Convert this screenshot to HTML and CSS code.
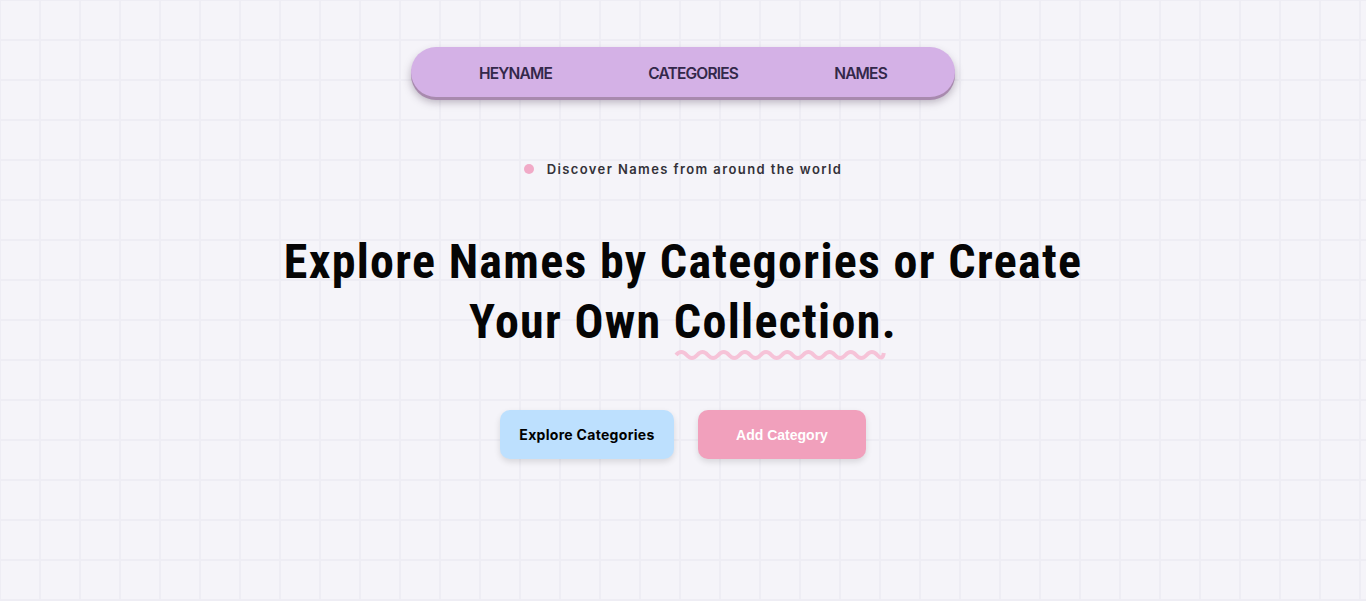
FILE: index.html
```html
<!DOCTYPE html>
<html lang="en">
<head>
<meta charset="utf-8">
<title>HeyName</title>
<link rel="stylesheet" href="styles.css">
</head>
<body>
<div class="page">
  <nav class="nav">
    <a class="nav-link" href="#">HEYNAME</a>
    <a class="nav-link" href="#">CATEGORIES</a>
    <a class="nav-link" href="#">NAMES</a>
  </nav>
  <main class="hero">
    <p class="eyebrow"><span class="dot"></span>Discover Names from around the world</p>
    <h1 class="title">Explore Names by Categories or Create<br>Your Own <span class="wavy">Collection<svg class="wave" viewBox="0 0 210 12" preserveAspectRatio="none"><path d="M2 6 Q7.25 0 12.5 6 T23 6 T33.5 6 T44 6 T54.5 6 T65 6 T75.5 6 T86 6 T96.5 6 T107 6 T117.5 6 T128 6 T138.5 6 T149 6 T159.5 6 T170 6 T180.5 6 T191 6 T201.5 6 T208 4" fill="none" stroke="#f6c3d8" stroke-width="4"/></svg></span>.</h1>
    <div class="actions">
      <a class="btn btn-blue" href="#">Explore Categories</a>
      <a class="btn btn-pink" href="#">Add Category</a>
    </div>
  </main>
</div>
</body>
</html>
```
FILE: styles.css
```css
html, body {
  margin: 0;
  padding: 0;
}
body {
  background-color: #f5f4f9;
  background-image:
    linear-gradient(to right, #eeedf4 2px, transparent 2px),
    linear-gradient(to bottom, #eeedf4 2px, transparent 2px);
  background-size: 40px 40px;
  background-position: -1px -1px;
  min-height: 601px;
}
.page {
  display: flex;
  flex-direction: column;
  align-items: center;
  padding-top: 47px;
}
.nav {
  width: 544px;
  height: 50px;
  box-sizing: border-box;
  padding: 2px 68px 0;
  display: flex;
  justify-content: space-between;
  align-items: center;
  background: #d4b1e6;
  border-radius: 25px;
  box-shadow: 0 3px 0 #a88aae, 0 5px 8px rgba(60, 40, 70, 0.35);
}
.nav-link {
  font-family: "Inter", sans-serif;
  font-weight: 600;
  font-size: 15.5px;
  color: #33284a;
  text-decoration: none;
  letter-spacing: -0.8px;
}
.hero {
  display: flex;
  flex-direction: column;
  align-items: center;
}
.eyebrow {
  margin: 64px 0 0;
  display: flex;
  align-items: center;
  font-family: "Inter", sans-serif;
  font-weight: 600;
  font-size: 13px;
  letter-spacing: 1.4px;
  color: #333138;
}
.dot {
  width: 10px;
  height: 10px;
  border-radius: 50%;
  background: #f1aac7;
  margin-right: 13px;
}
.title {
  margin: 55px 0 0;
  font-family: "Roboto", sans-serif;
  font-stretch: 80%;
  font-weight: 700;
  font-size: 48px;
  line-height: 60px;
  letter-spacing: 1.3px;
  text-align: center;
  color: #050505;
}
.wavy {
  position: relative;
  display: inline-block;
}
.wave {
  position: absolute;
  left: 0;
  right: -4px;
  bottom: -9px;
  width: calc(100% + 4px);
  height: 12px;
}
.actions {
  margin-top: 58px;
  display: flex;
  gap: 24px;
}
.btn {
  height: 49px;
  border-radius: 10px;
  display: flex;
  align-items: center;
  justify-content: center;
  text-decoration: none;
  font-size: 14px;
  font-weight: 700;
  box-shadow: 0 3px 6px rgba(0, 0, 0, 0.12);
}
.btn-blue {
  width: 174px;
  background: #bde0fe;
  color: #000;
  font-family: "Inter", sans-serif;
  letter-spacing: 0.3px;
}
.btn-pink {
  width: 168px;
  background: #f1a0bc;
  color: #fff;
  font-family: "Liberation Sans", Arial, sans-serif;
}
```
